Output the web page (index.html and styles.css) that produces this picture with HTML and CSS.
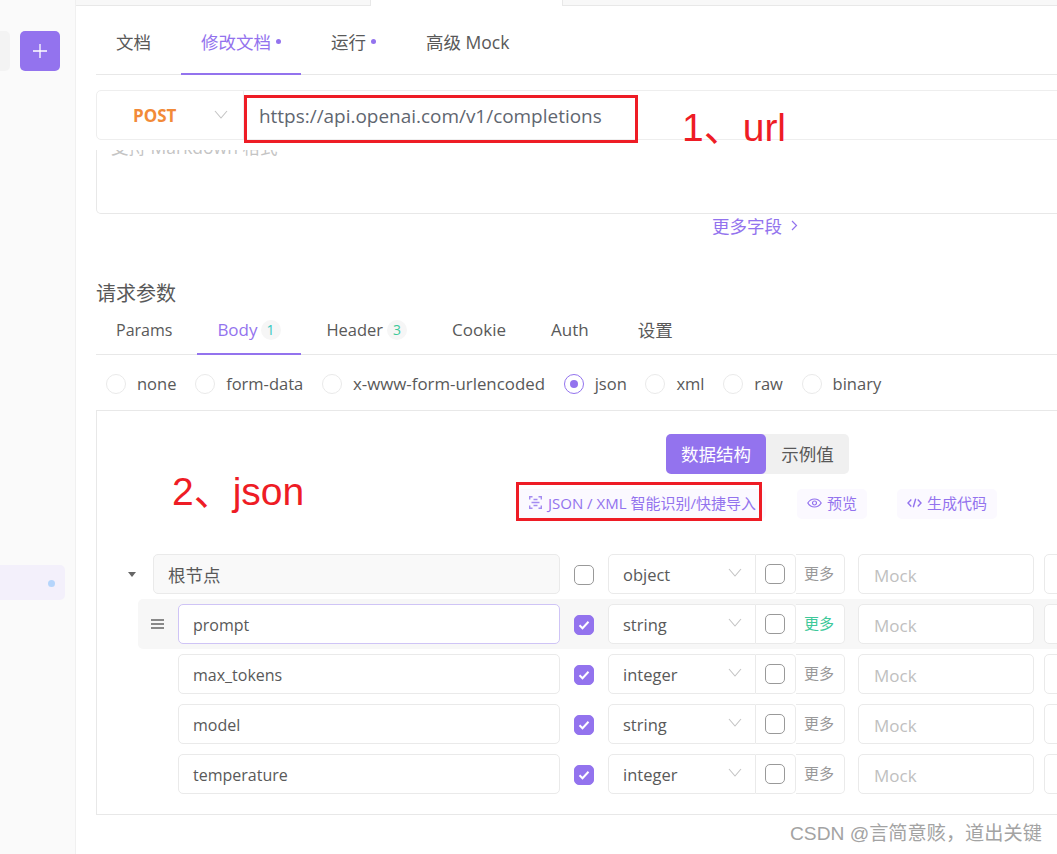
FILE: index.html
```html
<!DOCTYPE html>
<html lang="zh">
<head>
<meta charset="utf-8">
<title>修改文档</title>
<link rel="stylesheet" href="styles.css">
</head>
<body>
<div class="app">
  <aside class="sidebar">
    <div class="side-top">
      <div class="side-search"></div>
      <div class="side-add"><svg viewBox="0 0 16 16" width="16" height="16"><path d="M8 1v14M1 8h14" stroke="#fff" stroke-width="1.3" fill="none"/></svg></div>
    </div>
    <div class="side-item"><span class="side-dot"></span></div>
  </aside>
  <main class="main">
    <div class="topstrip">
      <div class="strip strip-left"></div>
      <div class="strip-active"></div>
      <div class="strip strip-right"></div>
    </div>
    <div class="content">
      <nav class="doc-tabs">
        <a class="doc-tab">文档</a>
        <a class="doc-tab is-active">修改文档<i class="dot"></i></a>
        <a class="doc-tab">运行<i class="dot"></i></a>
        <a class="doc-tab">高级 Mock</a>
      </nav>
      <div class="url-group">
        <div class="method"><span class="method-name">POST</span>
          <svg class="chev-method" viewBox="0 0 14 9" width="14" height="9"><path d="M1 1l6 7 6-7" fill="none" stroke="#c4c4c4" stroke-width="1.1"/></svg>
        </div>
        <div class="url-text">https://api.openai.com/v1/completions</div>
      </div>
      <div class="desc-box"><div class="desc-text">支持 Markdown 格式</div></div>
      <div class="more-fields">更多字段<svg viewBox="0 0 7 11" width="7" height="11"><path d="M1 1l4.5 4.5L1 10" fill="none" stroke="#9373ee" stroke-width="1.2"/></svg></div>
      <h2 class="params-title">请求参数</h2>
      <nav class="sub-tabs">
        <a class="sub-tab sub-tab-params">Params</a>
        <a class="sub-tab is-active">Body<span class="badge badge-teal">1</span></a>
        <a class="sub-tab sub-tab-header">Header<span class="badge badge-green">3</span></a>
        <a class="sub-tab">Cookie</a>
        <a class="sub-tab">Auth</a>
        <a class="sub-tab sub-tab-last">设置</a>
      </nav>
      <div class="radios">
        <label class="radio"><i class="radio-dot"></i>none</label>
        <label class="radio"><i class="radio-dot"></i>form-data</label>
        <label class="radio radio-wide"><i class="radio-dot"></i>x-www-form-urlencoded</label>
        <label class="radio"><i class="radio-dot is-on"></i>json</label>
        <label class="radio"><i class="radio-dot"></i>xml</label>
        <label class="radio"><i class="radio-dot"></i>raw</label>
        <label class="radio"><i class="radio-dot"></i>binary</label>
      </div>
      <section class="panel">
        <div class="segment">
          <div class="seg seg-on">数据结构</div>
          <div class="seg seg-off">示例值</div>
        </div>
        <div class="tools">
          <div class="tool tool-json"><svg viewBox="0 0 13 13" width="13" height="13"><path d="M.7 3.500V.7h2.800M9.500.7h2.800v2.800M12.300 9.500v2.800H9.500M3.500 12.300H.7V9.500M2.500 6.500h8M4.500 3.500h4M4.500 9.500h4" fill="none" stroke="#a48bf1" stroke-width="1.400"/></svg>JSON / XML 智能识别/快捷导入</div>
          <div class="tool tool-preview"><svg viewBox="0 0 15 10" width="15" height="10"><path d="M.8 5C2.500 2.200 4.700 1 7.500 1s5 1.200 6.700 4C12.500 7.800 10.300 9 7.500 9S2.500 7.800.8 5z" fill="none" stroke="#9373ee" stroke-width="1.200"/><circle cx="7.500" cy="5" r="2" fill="none" stroke="#9373ee" stroke-width="1.200"/></svg>预览</div>
          <div class="tool tool-code"><svg viewBox="0 0 15 10" width="15" height="10"><path d="M4.300 1.500L1 5l3.300 3.500M10.700 1.500L14 5l-3.300 3.500M8.700.8L6.300 9.200" fill="none" stroke="#9373ee" stroke-width="1.400"/></svg>生成代码</div>
        </div>
        <div class="tree">
          <div class="row row-root">
            <div class="caret-cell"><i class="caret"></i></div>
            <div class="name name-root">根节点</div>
            <i class="check"></i>
            <div class="typegroup">
              <div class="type">object<svg class="chev" viewBox="0 0 14 9" width="14" height="9"><path d="M1 1l6 7 6-7" fill="none" stroke="#c4c4c4" stroke-width="1.1"/></svg></div>
              <div class="req"><i class="check check-inner"></i></div>
              <div class="more">更多</div>
            </div>
            <div class="mock">Mock</div>
            <div class="extra"></div>
          </div>
          <div class="row row-hover">
            <div class="handle"><svg viewBox="0 0 15 10" width="15" height="10"><path d="M1 1h13M1 5h13M1 9h13" stroke="#666" stroke-width="1.500" fill="none"/></svg></div>
            <div class="name name-focus">prompt</div>
            <i class="check is-on"><svg viewBox="0 0 12 10" width="12" height="10"><path d="M1.500 5.200l3 3 6-6.500" fill="none" stroke="#fff" stroke-width="2"/></svg></i>
            <div class="typegroup">
              <div class="type">string<svg class="chev" viewBox="0 0 14 9" width="14" height="9"><path d="M1 1l6 7 6-7" fill="none" stroke="#c4c4c4" stroke-width="1.1"/></svg></div>
              <div class="req"><i class="check check-inner"></i></div>
              <div class="more more-green">更多</div>
            </div>
            <div class="mock">Mock</div>
            <div class="extra"></div>
          </div>
          <div class="row">
            <div class="handle"></div>
            <div class="name">max_tokens</div>
            <i class="check is-on"><svg viewBox="0 0 12 10" width="12" height="10"><path d="M1.500 5.200l3 3 6-6.500" fill="none" stroke="#fff" stroke-width="2"/></svg></i>
            <div class="typegroup">
              <div class="type">integer<svg class="chev" viewBox="0 0 14 9" width="14" height="9"><path d="M1 1l6 7 6-7" fill="none" stroke="#c4c4c4" stroke-width="1.1"/></svg></div>
              <div class="req"><i class="check check-inner"></i></div>
              <div class="more">更多</div>
            </div>
            <div class="mock">Mock</div>
            <div class="extra"></div>
          </div>
          <div class="row">
            <div class="handle"></div>
            <div class="name">model</div>
            <i class="check is-on"><svg viewBox="0 0 12 10" width="12" height="10"><path d="M1.500 5.200l3 3 6-6.500" fill="none" stroke="#fff" stroke-width="2"/></svg></i>
            <div class="typegroup">
              <div class="type">string<svg class="chev" viewBox="0 0 14 9" width="14" height="9"><path d="M1 1l6 7 6-7" fill="none" stroke="#c4c4c4" stroke-width="1.1"/></svg></div>
              <div class="req"><i class="check check-inner"></i></div>
              <div class="more">更多</div>
            </div>
            <div class="mock">Mock</div>
            <div class="extra"></div>
          </div>
          <div class="row">
            <div class="handle"></div>
            <div class="name">temperature</div>
            <i class="check is-on"><svg viewBox="0 0 12 10" width="12" height="10"><path d="M1.500 5.200l3 3 6-6.500" fill="none" stroke="#fff" stroke-width="2"/></svg></i>
            <div class="typegroup">
              <div class="type">integer<svg class="chev" viewBox="0 0 14 9" width="14" height="9"><path d="M1 1l6 7 6-7" fill="none" stroke="#c4c4c4" stroke-width="1.1"/></svg></div>
              <div class="req"><i class="check check-inner"></i></div>
              <div class="more">更多</div>
            </div>
            <div class="mock">Mock</div>
            <div class="extra"></div>
          </div>
        </div>
      </section>
    </div>
  </main>
  <div class="mark mark-url"></div>
  <div class="mark mark-json"></div>
  <div class="note note-url">1、url</div>
  <div class="note note-json">2、json</div>
  <div class="watermark">CSDN @言简意赅，道出关键</div>
</div>
</body>
</html>
```

FILE: styles.css
```css
* { box-sizing: border-box; }
html, body { margin: 0; padding: 0; background: #fff; }
body {
  font-family: "Open Sans", "Noto Sans CJK SC", sans-serif;
  font-size: 17px;
  color: #595959;
}
.app { position: relative; display: flex; width: 1057px; height: 854px; overflow: hidden; }

.sidebar { flex: 0 0 76px; background: #fafafa; border-right: 1px solid #f0f0f0; padding-top: 31px; }
.side-top { display: flex; gap: 10px; height: 40px; }
.side-search { width: 10px; background: #f3f3f3; border-radius: 0 5px 5px 0; }
.side-add { width: 40px; height: 40px; border-radius: 5px; background: #9373ee; display: flex; align-items: center; justify-content: center; }
.side-item { margin-top: 494px; width: 65px; height: 35px; border-radius: 0 5px 5px 0; background: #f3f0fb; padding: 15px 0 0 48px; }
.side-dot { display: block; width: 7px; height: 7px; border-radius: 50%; background: #b5d5fb; }

.main { flex: 1; min-width: 0; }
.topstrip { display: flex; height: 6px; }
.strip { background: #f8f8f8; border-bottom: 1px solid #e8e8e8; }
.strip-left { flex: 0 0 295px; border-right: 1px solid #e8e8e8; }
.strip-active { flex: 0 0 191px; }
.strip-right { flex: 1; border-left: 1px solid #e8e8e8; }

.content { padding-left: 20px; margin-right: -12px; }

.doc-tabs { display: flex; height: 69px; gap: 10px; border-bottom: 1px solid #e8e8e8; }
.doc-tab { display: flex; align-items: center; padding: 2px 20px 0; height: 69px; font-size: 17.500px; }
.doc-tab.is-active { color: #9373ee; border-bottom: 2px solid #9373ee; padding-top: 4px; }
.dot { width: 5px; height: 5px; border-radius: 50%; background: #9373ee; margin-left: 5px; }

.url-group { display: flex; height: 50px; margin-top: 15px; border: 1px solid #eee; border-radius: 5px; }
.method { flex: 0 0 147px; display: flex; align-items: center; border-right: 1px solid #eee; padding-left: 36px; }
.method-name { color: #f28a38; font-weight: 700; font-size: 17px; }
.chev-method { margin: 0 0 2px 38px; }
.url-text { font-size: 18.950px; line-height: 50px; padding-left: 15px; color: #5f6670; }

.desc-box { margin-top: 10px; height: 64px; border: 1px solid #e8e8e8; border-top: 0; border-radius: 0 0 5px 5px; overflow: hidden; padding-left: 14px; }
.desc-text { margin-top: -15px; line-height: 24px; font-size: 17.500px; color: #c4c4c4; }

.more-fields { display: flex; align-items: center; gap: 9px; height: 23px; padding-left: 616px; color: #9373ee; font-size: 17.500px; }

.params-title { margin: 44px 0 0; height: 26px; font-size: 20px; line-height: 26px; font-weight: 400; color: #595959; }

.sub-tabs { display: flex; gap: 5px; height: 48px; border-bottom: 1px solid #e8e8e8; }
.sub-tab { display: flex; align-items: center; padding: 0 20px 3px; height: 48px; }
.sub-tab-params { font-size: 16px; padding-bottom: 2px; }
.sub-tab-header { font-size: 16.500px; }
.sub-tab-header .badge { margin-left: 4px; }
.sub-tab.is-active { color: #9373ee; border-bottom: 2px solid #9373ee; padding-bottom: 1px; width: 104px; }
.sub-tab-last { margin-left: 4px; font-size: 17.500px; }
.badge { width: 20px; height: 20px; border-radius: 50%; background: #f6f6f6; font-size: 14px; margin-left: 3px; display: flex; align-items: center; justify-content: center; }
.badge-teal { color: #35c7c0; }
.badge-green { color: #3ec99a; }

.radios { display: flex; align-items: center; gap: 18.700px; height: 55px; padding: 2px 0 0 10px; font-size: 16.500px; }
.radio { display: flex; align-items: center; gap: 11px; }
.radio-wide { font-size: 16.850px; }
.radio-dot { width: 20px; height: 20px; border-radius: 50%; border: 1px solid #eaeaea; background: #fff; display: block; }
.radio-dot.is-on { border-color: #9373ee; position: relative; }
.radio-dot.is-on::after { content: ""; position: absolute; left: 5px; top: 5px; width: 8px; height: 8px; border-radius: 50%; background: #9373ee; }

.panel { height: 405px; border: 1px solid #e8e8e8; overflow: hidden; padding-top: 23px; }
.segment { display: flex; height: 40px; margin-left: 569px; width: 183px; font-size: 17.500px; background: #f0f0f0; border-radius: 5px; }
.seg { display: flex; align-items: center; justify-content: center; padding-bottom: 2px; }
.seg-on { width: 100px; background: #9373ee; color: #fff; border-radius: 5px; }
.seg-off { width: 83px; }

.tools { display: flex; height: 30px; margin-top: 15px; margin-left: 421px; font-size: 15px; color: #9373ee; }
.tool { display: flex; align-items: center; gap: 5px; background: #fbf9ff; border-radius: 5px; padding-bottom: 3px; }
.tool-json { width: 248px; padding-left: 11px; margin-right: 31px; gap: 6px; white-space: nowrap; }
.tool-preview { width: 70px; padding-left: 10px; margin-right: 30px; }
.tool-code { width: 100px; padding-left: 10px; }

.tree { margin-top: 30px; width: 1100px; }
.row { display: flex; align-items: flex-start; height: 50px; padding-top: 5px; margin-left: 41px; border-radius: 5px; }
.row-root { margin-left: 23px; }
.row-hover { background: #f7f7f7; }
.caret-cell { flex: 0 0 33px; height: 40px; display: flex; align-items: center; padding-left: 8px; }
.caret { width: 0; height: 0; border: 4px solid transparent; border-top: 5px solid #666; border-bottom: 0; }
.handle { flex: 0 0 40px; height: 40px; display: flex; align-items: center; padding-left: 12px; }
.name { flex: 0 0 382px; height: 40px; line-height: 40px; padding-left: 14px; background: #fff; border: 1px solid #eaeaea; border-radius: 5px; margin-right: 14px; font-size: 16px; }
.name-root { flex-basis: 407px; background: #f9f9f9; font-size: 17.500px; }
.name-focus { border-color: #cfc4f6; }
.check { flex: 0 0 20px; width: 20px; height: 20px; margin-top: 11px; border: 1px solid #999; border-radius: 5px; background: #fff; display: flex; align-items: center; justify-content: center; }
.check.is-on { background: #9373ee; border-color: #9373ee; }
.check-inner { margin: 0; }
.typegroup { display: flex; height: 40px; margin-left: 14px; }
.type { width: 148px; display: flex; align-items: center; justify-content: space-between; padding: 0 13px 0 14px; background: #fff; border: 1px solid #eaeaea; border-radius: 5px 0 0 5px; font-size: 16.500px; }
.chev { margin-bottom: 3px; }
.req { width: 40px; display: flex; align-items: center; justify-content: center; background: #fff; border: 1px solid #eaeaea; border-left: 0; border-radius: 0 5px 5px 0; padding-right: 2px; }
.more { width: 49px; display: flex; align-items: center; justify-content: center; background: #fff; border: 1px solid #eaeaea; border-left: 0; border-radius: 0 5px 5px 0; font-size: 15px; color: #999; padding: 0 2px 3px 0; }
.more-green { color: #3ec99a; }
.mock { flex: 0 0 176px; height: 40px; line-height: 42px; margin-left: 13px; padding-left: 15px; background: #fff; border: 1px solid #eaeaea; border-radius: 5px; color: #c0c0c0; }
.extra { flex: 0 0 100px; height: 40px; margin-left: 10px; background: #fff; border: 1px solid #eaeaea; border-radius: 5px; }

.mark { position: absolute; border: 3px solid #ee1c25; }
.mark-url { left: 244px; top: 95px; width: 394px; height: 48px; }
.mark-json { left: 516px; top: 482px; width: 246px; height: 39px; }
.note { position: absolute; color: #ee1c25; font-size: 39px; line-height: 50px; font-family: "Liberation Sans", "Noto Sans CJK SC", sans-serif; white-space: nowrap; }
.note-url { left: 682px; top: 103px; }
.note-json { left: 172px; top: 467px; }
.watermark { position: absolute; left: 790px; top: 821px; font-size: 19.200px; line-height: 26px; color: #a3a3a3; white-space: nowrap; font-family: "Liberation Sans", "Noto Sans CJK SC", sans-serif; }
```
